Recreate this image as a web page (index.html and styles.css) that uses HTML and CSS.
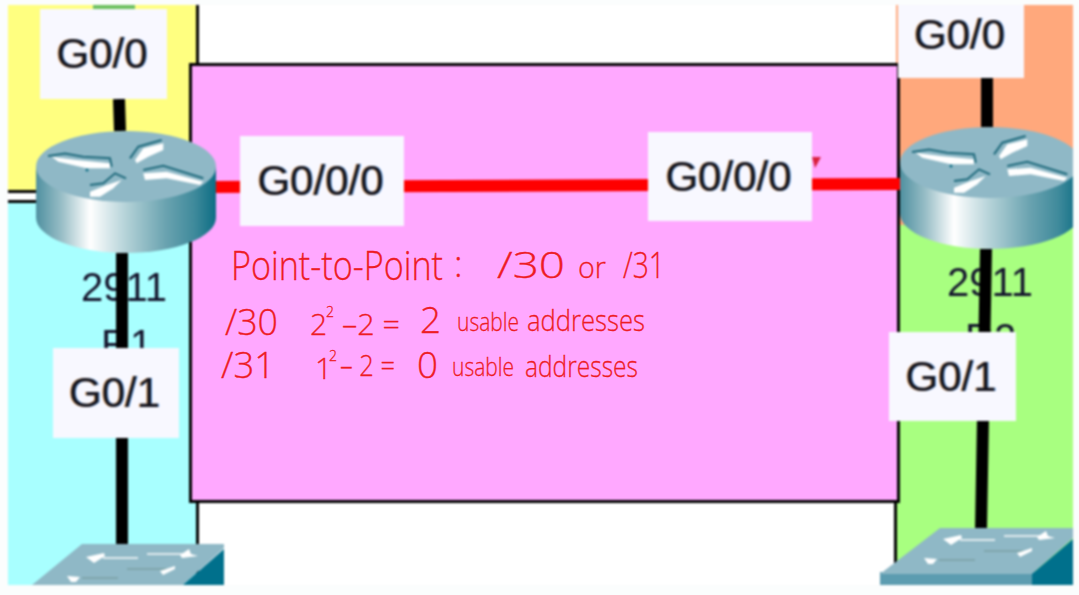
FILE: index.html
```html
<!DOCTYPE html>
<html lang="en">
<head>
    <meta charset="UTF-8">
    <meta name="viewport" content="width=device-width, initial-scale=1.0">
    <title>Point-to-Point subnet</title>
    <link rel="stylesheet" href="styles.css">
</head>
<body>
<main class="canvas">
    <div class="topology">
        <!-- Coloured networks -->
        <div class="net net-top"></div>
        <div class="net net-yellow"></div>
        <div class="net net-cyan"></div>
        <div class="net net-orange"></div>
        <div class="net net-green"></div>
        <div class="net-pink"></div>

        <!-- Device names sit under the cables -->
        <div class="device-name model-r1">2911</div>
        <div class="device-name name-r1">R1</div>
        <div class="device-name model-r2">2911</div>
        <div class="device-name name-r2">R2</div>

        <!-- Cables -->
        <svg class="cables" viewBox="0 0 1079 595" aria-hidden="true">
            <path class="cable-black" d="M119 99 L120 131 M122 253 L122 545"/>
            <path class="cable-black" d="M987 78 L987 127 M986 249 L981 530"/>
            <path class="cable-red" d="M216 187 L900 184"/>
            <path class="cable-tick" d="M812 157 L821 157 L815 168 Z"/>
        </svg>

        <!-- Shared device icons -->
        <svg class="defs" aria-hidden="true">
            <defs>
                <linearGradient id="router-side" x1="0" y1="0" x2="1" y2="0">
                    <stop offset="0" stop-color="#4f90a0"/>
                    <stop offset="0.14" stop-color="#97bdc6"/>
                    <stop offset="0.3" stop-color="#ffffff"/>
                    <stop offset="0.5" stop-color="#b4d2d8"/>
                    <stop offset="0.72" stop-color="#6aa3b0"/>
                    <stop offset="0.88" stop-color="#3f8a9b"/>
                    <stop offset="1" stop-color="#0c6d85"/>
                </linearGradient>
                <symbol id="router" viewBox="0 0 180 122">
                    <path fill="url(#router-side)" d="M0 35.5 H180 V86.5 A90 35.5 0 0 1 0 86.5 Z"/>
                    <ellipse cx="90" cy="35.5" rx="90" ry="35.5" fill="#8fb8c6"/>
                    <path fill="#fff" d="M15.7 25.7 L40.7 29 L74 32.3 V37.3 H50.7 L22.3 30.7 Z"/>
                    <path class="arrow-edge" d="M12 25 L29 22.5 L47 25.7 L74 27.3 L75.7 35.7"/>
                    <path fill="#fff" d="M127.3 12.3 V19 L112.3 25.7 L100.7 32.3 L99 29 L107.3 17.3 Z"/>
                    <path class="arrow-edge" d="M94 27.3 L102.3 15.7 L125.7 9"/>
                    <path fill="#fff" d="M107.3 42.3 L130.7 40.7 L167.3 50.7 L164 54 L130.7 47.3 L109 49 Z"/>
                    <path class="arrow-edge" d="M107.3 39 L127.3 34.7 L167.3 47.3"/>
                    <path fill="#fff" d="M54 60.7 L70.7 54 L85.7 49 L77.3 57.3 L64 65.7 H54 Z"/>
                    <path class="arrow-edge" d="M54 54 L67.3 52.3 L79 42.3 L90 47.3"/>
                    <circle cx="51" cy="39" r="1.5" fill="#0c6d85"/>
                </symbol>
                <symbol id="switch-arrows" viewBox="0 0 170 40">
                    <path class="switch-line" d="M71 14 H106 M115 10 H155"/>
                    <path class="switch-line-dim" d="M95 25 H135 M50 34 H86"/>
                    <path fill="#fff" d="M54 13 L72 9 L73 12 L62 19 L58 16 Z"/>
                    <path fill="#fff" d="M148 11 L157 5 L159 10 L166 12 L150 14 Z"/>
                    <path fill="#fff" d="M128 27 L143 22 L143 25 L131 31 Z"/>
                    <path fill="#fff" d="M35 32 L48 33 L44 38 L39 38 Z"/>
                </symbol>
            </defs>
        </svg>

        <!-- Routers -->
        <svg class="router router-r1" aria-hidden="true"><use href="#router" width="180" height="122"/></svg>
        <svg class="router router-r2" aria-hidden="true"><use href="#router" width="180" height="122"/></svg>

        <!-- Switches -->
        <svg class="switch switch-one" viewBox="0 0 192 41" aria-hidden="true">
            <path class="switch-top" d="M50 0 H192 V4 L151 41 H0 Z"/>
            <path class="switch-end" d="M192 5 V41 H151 Z"/>
            <use href="#switch-arrows" width="170" height="40"/>
        </svg>
        <svg class="switch switch-two" viewBox="0 0 193 57" aria-hidden="true">
            <path class="switch-front" d="M0 44 H193 V57 H0 Z"/>
            <path class="switch-top" d="M60 0 H193 V10 L152 46 H0 Z"/>
            <path class="switch-end" d="M193 11 V57 H152 V46 Z"/>
            <use href="#switch-arrows" x="9" y="-2" width="170" height="40"/>
        </svg>

        <!-- Interface labels -->
        <div class="port port-r1-top">G0/0</div>
        <div class="port port-r1-wan">G0/0/0</div>
        <div class="port port-r2-wan">G0/0/0</div>
        <div class="port port-r2-top">G0/0</div>
        <div class="port port-r1-bottom">G0/1</div>
        <div class="port port-r2-bottom">G0/1</div>
    </div>

    <!-- Pen notes -->
    <svg class="notes" viewBox="0 0 1079 595">
        <text class="ink ink-xl" x="231" y="280" textLength="212" lengthAdjust="spacingAndGlyphs">Point-to-Point</text>
        <text class="ink ink-lg" x="454" y="277">:</text>
        <text class="ink ink-lg" x="497" y="278" textLength="68" lengthAdjust="spacingAndGlyphs">/30</text>
        <text class="ink ink-md" x="578" y="278" textLength="28" lengthAdjust="spacingAndGlyphs">or</text>
        <text class="ink ink-lg" x="623" y="278" textLength="42" lengthAdjust="spacingAndGlyphs">/31</text>

        <text class="ink ink-lg" x="225" y="335" textLength="53" lengthAdjust="spacingAndGlyphs">/30</text>
        <text class="ink ink-md" x="310" y="335">2</text>
        <text class="ink ink-xs" x="326" y="317">2</text>
        <text class="ink ink-md" x="342" y="335" textLength="58" lengthAdjust="spacingAndGlyphs">–2 =</text>
        <text class="ink ink-lg" x="420" y="333" textLength="21" lengthAdjust="spacingAndGlyphs">2</text>
        <text class="ink ink-sm" x="457" y="331" textLength="62" lengthAdjust="spacingAndGlyphs">usable</text>
        <text class="ink ink-md" x="527" y="331" textLength="118" lengthAdjust="spacingAndGlyphs">addresses</text>

        <text class="ink ink-lg" x="221" y="378" textLength="54" lengthAdjust="spacingAndGlyphs">/31</text>
        <text class="ink ink-md" x="315" y="379">1</text>
        <text class="ink ink-xs" x="329" y="361">2</text>
        <text class="ink ink-md" x="340" y="376" textLength="55" lengthAdjust="spacingAndGlyphs">– 2 =</text>
        <text class="ink ink-lg" x="417" y="378" textLength="21" lengthAdjust="spacingAndGlyphs">0</text>
        <text class="ink ink-sm" x="452" y="376" textLength="62" lengthAdjust="spacingAndGlyphs">usable</text>
        <text class="ink ink-md" x="525" y="377" textLength="113" lengthAdjust="spacingAndGlyphs">addresses</text>
    </svg>
</main>
</body>
</html>
```

FILE: styles.css
```css
body {
    margin: 0;
    background: #fbfdfd;
    font-family: "Liberation Sans", Arial, sans-serif;
}
.canvas {
    position: relative;
    width: 1079px;
    height: 595px;
    overflow: hidden;
}
.topology {
    position: absolute;
    left: 8px;
    top: 5px;
    width: 1065px;
    height: 580px;
    background: white;
    overflow: hidden;
    filter: blur(0.9px);
}

/* Everything in .topology is placed in canvas coordinates minus the 8/5 offset */
.topology > * { position: absolute; }

/* Networks */
.net-top {
    left: 85px; top: 0;
    width: 42px; height: 4px;
    background: #6cc060;
    z-index: 1;
}
.net-yellow {
    left: 0; top: 0;
    width: 188px; height: 185px;
    background: #ffff80;
    border-right: 3px solid black;
    border-bottom: 3px solid black;
}
.net-cyan {
    left: 0; top: 195px;
    width: 188px; height: 385px;
    background: #a8ffff;
    border-right: 3px solid black;
    border-top: 3px solid black;
}
.net-orange {
    left: 888px; top: 0;
    width: 177px; height: 225px;
    background: #ffa87c;
}
.net-green {
    left: 886px; top: 220px;
    width: 179px; height: 360px;
    background: #a8ff80;
    border-left: 3px solid black;
    box-sizing: border-box;
}
.net-pink {
    left: 181px; top: 58px;
    width: 705px; height: 434px;
    background: #ffa8ff;
    border: 3px solid black;
}

/* Device names */
.device-name {
    font-size: 40px;
    line-height: 40px;
    color: #14142c;
}
.model-r1 { left: 73px; top: 262px; }
.name-r1 { left: 93px; top: 319px; }
.model-r2 { left: 939px; top: 257px; }
.name-r2 { left: 957px; top: 313px; }

/* Cables */
.cables {
    left: -8px; top: -5px;
    width: 1079px; height: 595px;
}
.cable-black {
    fill: none;
    stroke: black;
    stroke-width: 12;
}
.cable-red {
    fill: none;
    stroke: #ff0000;
    stroke-width: 12;
}
.cable-tick { fill: #d8203c; }

/* Devices */
.defs { width: 0; height: 0; }
.router { width: 180px; height: 122px; }
.router-r1 { left: 28px; top: 126px; }
.router-r2 { left: 892px; top: 122px; }
.arrow-edge {
    fill: none;
    stroke: #1f6a7c;
    stroke-width: 2;
}
.switch-one { left: 24px; top: 539px; width: 192px; height: 41px; }
.switch-two { left: 872px; top: 523px; width: 193px; height: 57px; }
.switch-top { fill: #8fb8c6; }
.switch-end { fill: #00708c; }
.switch-front { fill: #5c9cb0; }
.switch-line { stroke: #dfeaee; stroke-width: 2; fill: none; }
.switch-line-dim { stroke: #7fa6ac; stroke-width: 2; fill: none; }

/* Interface labels */
.port {
    display: flex;
    align-items: center;
    justify-content: center;
    padding-right: 3px;
    box-sizing: border-box;
    background: #f8f8ff;
    color: #14141e;
    font-size: 42px;
    text-shadow: -1px 0 rgba(230, 130, 20, 0.7), 1px 0 rgba(30, 130, 240, 0.7);
}
.port-r1-top { left: 32px; top: 4px; width: 127px; height: 90px; }
.port-r1-wan { left: 232px; top: 131px; width: 164px; height: 90px; }
.port-r2-wan { left: 640px; top: 127px; width: 164px; height: 89px; }
.port-r2-top {
    left: 890px; top: 0;
    width: 126px; height: 73px;
    padding-bottom: 13px;
}
.port-r1-bottom { left: 45px; top: 343px; width: 126px; height: 90px; }
.port-r2-bottom { left: 881px; top: 327px; width: 127px; height: 89px; }

/* Pen notes */
.notes {
    position: absolute;
    left: 0; top: 0;
    width: 1079px; height: 595px;
    pointer-events: none;
}
.ink {
    font-family: "Open Sans", sans-serif;
    font-weight: 300;
    fill: #ee1c24;
    stroke: #ee1c24;
    stroke-width: 0.3;
}
.ink-xl { font-size: 40px; }
.ink-lg { font-size: 36px; }
.ink-md { font-size: 30px; }
.ink-sm { font-size: 26px; }
.ink-xs { font-size: 14px; }
```
